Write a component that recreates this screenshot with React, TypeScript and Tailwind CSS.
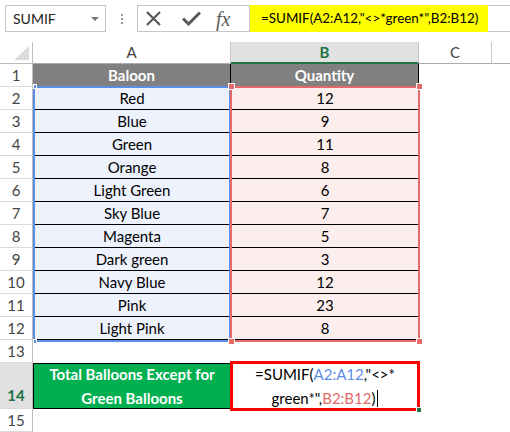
const rows: [string, number][] = [
  ["Red", 12],
  ["Blue", 9],
  ["Green", 11],
  ["Orange", 8],
  ["Light Green", 6],
  ["Sky Blue", 7],
  ["Magenta", 5],
  ["Dark green", 3],
  ["Navy Blue", 12],
  ["Pink", 23],
  ["Light Pink", 8],
];

function RowNum({ n, h = "h-[23px]" }: { n: number; h?: string }) {
  return (
    <div className={`${h} w-[33px] shrink-0 border-r border-b border-r-[#bdbdbd] border-b-[#dadada] flex items-center justify-center text-[15px] text-[#444]`}>
      {n}
    </div>
  );
}

export default function App() {
  return (
    <div className="relative w-[510px] h-[432px] overflow-hidden bg-white font-[Lato,sans-serif] text-black">
      {/* formula bar */}
      <div className="h-[42px] flex items-start pt-[5px] pl-[5px]">
        <div className="w-[101px] h-[27px] border border-[#c6c6c6] flex items-center justify-between pl-[7px] pr-[6px] text-[14px] text-[#222]">
          <span>SUMIF</span>
          <span className="w-0 h-0 border-x-[4px] border-x-transparent border-t-[4px] border-t-[#777]" />
        </div>
        <div className="w-[31px] h-[27px] flex flex-col items-center justify-center gap-[2px]">
          <span className="w-[2px] h-[2px] bg-[#999]" />
          <span className="w-[2px] h-[2px] bg-[#999]" />
          <span className="w-[2px] h-[2px] bg-[#999]" />
        </div>
        <div className="w-[113px] h-[27px] border border-[#c6c6c6] flex items-center pl-[8px] text-[#5a5a5a]">
          <svg width="15" height="15" viewBox="0 0 15 15" className="shrink-0">
            <path d="M1 1 L14 14 M14 1 L1 14" stroke="#5a5a5a" strokeWidth="2.2" />
          </svg>
          <svg width="19" height="15" viewBox="0 0 19 15" className="ml-[21px] shrink-0">
            <path d="M1 7.5 L6.5 13 L18 1.5" stroke="#5a5a5a" strokeWidth="3" fill="none" />
          </svg>
          <span className="ml-[15px] font-['Liberation_Serif',serif] italic text-[20px] leading-none">fx</span>
        </div>
        <div className="flex-1 h-[27px] flex">
          <div className="w-[238px] h-full bg-[#ffff00] flex items-center pl-[11px] text-[13.4px] whitespace-nowrap">
            =SUMIF(A2:A12,"&lt;&gt;*green*",B2:B12)
          </div>
          <div className="flex-1 h-full border-y border-[#c6c6c6]" />
        </div>
      </div>

      {/* column headers */}
      <div className="flex h-[22px] text-[15px] text-[#444]">
        <div className="w-[33px] shrink-0 border-r border-b border-[#bdbdbd] flex items-end justify-end pr-[3px] pb-[3px]">
          <svg width="15" height="14" viewBox="0 0 15 14">
            <polygon points="15,0 15,14 0,14" fill="#dcdcdc" />
          </svg>
        </div>
        <div className="w-[198px] shrink-0 border-r border-b border-r-[#c6c6c6] border-b-[#ababab] flex items-center justify-center">A</div>
        <div className="w-[188px] shrink-0 bg-[#e1e1e1] border-r border-r-[#c6c6c6] border-b-2 border-b-[#217346] flex items-center justify-center font-bold text-[#217346]">
          B
        </div>
        <div className="w-[73px] shrink-0 border-r border-b border-r-[#c6c6c6] border-b-[#ababab] flex items-center justify-center">C</div>
        <div className="flex-1 border-b border-[#ababab]" />
      </div>

      {/* row 1 */}
      <div className="flex">
        <RowNum n={1} />
        <div className="w-[198px] h-[23px] shrink-0 bg-[#808080] border-r border-black flex items-center justify-center text-white font-bold text-[15px]">
          Baloon
        </div>
        <div className="w-[188px] h-[23px] shrink-0 bg-[#808080] border-r border-black flex items-center justify-center text-white font-bold text-[15px]">
          Quantity
        </div>
      </div>

      {/* data rows */}
      {rows.map(([name, qty], i) => (
        <div key={name} className="flex">
          <RowNum n={i + 2} />
          <div className="w-[198px] h-[23px] shrink-0 bg-[#eef2fd] border-b border-black flex items-center justify-center text-[15px]">
            {name}
          </div>
          <div className="w-[188px] h-[23px] shrink-0 bg-[#fdeeee] border-b border-black flex items-center justify-center text-[15px]">
            {qty}
          </div>
        </div>
      ))}

      {/* row 13 */}
      <div className="flex">
        <RowNum n={13} />
      </div>

      {/* row 14 */}
      <div className="flex">
        <div className="h-[46px] w-[33px] shrink-0 bg-[#e1e1e1] border-r border-b border-r-[#bdbdbd] border-b-[#dadada] flex items-end justify-center pb-[2px] text-[15px] font-bold text-[#217346]">
          14
        </div>
        <div className="w-[198px] h-[46px] shrink-0 bg-[#00b050] border border-black flex flex-col items-center justify-center leading-[24px] text-white font-bold text-[15px]">
          <span>Total Balloons Except for</span>
          <span>Green Balloons</span>
        </div>
        <div className="w-[188px] h-[46px] shrink-0 flex flex-col items-center justify-center leading-[24px] text-[15px]">
          <span>
            =SUMIF(<span className="text-[#5b8ee6]">A2:A12</span>,"&lt;&gt;*
          </span>
          <span className="flex items-center">
            green*",<span className="text-[#e46a6a]">B2:B12</span>)
            <span className="inline-block w-px h-[17px] bg-black ml-[2px]" />
          </span>
        </div>
      </div>

      {/* row 15 */}
      <div className="flex">
        <RowNum n={15} />
      </div>

      {/* range highlights */}
      <div className="absolute left-[33px] top-[86px] w-[198px] h-[256px] border-2 border-[#5b8ee6]" />
      <div className="absolute left-[230px] top-[86px] w-[190px] h-[256px] border-2 border-[#e46a6a]" />
      <div className="absolute left-[33px] top-[84px] w-[4px] h-[5px] bg-[#5b8ee6] border border-white" />
      <div className="absolute left-[33px] top-[339px] w-[4px] h-[5px] bg-[#5b8ee6] border border-white" />
      <div className="absolute left-[228px] top-[83px] w-[7px] h-[7px] bg-[#e46a6a] border border-white" />
      <div className="absolute left-[416px] top-[83px] w-[7px] h-[7px] bg-[#e46a6a] border border-white" />
      <div className="absolute left-[228px] top-[338px] w-[7px] h-[7px] bg-[#e46a6a] border border-white" />
      <div className="absolute left-[416px] top-[338px] w-[7px] h-[7px] bg-[#e46a6a] border border-white" />

      {/* active cell */}
      <div className="absolute left-[230px] top-[361px] w-[190px] h-[50px] border-[3px] border-[#ff0000]" />
      <div className="absolute left-[416px] top-[407px] w-[6px] h-[6px] bg-[#217346] border border-white" />
    </div>
  );
}
